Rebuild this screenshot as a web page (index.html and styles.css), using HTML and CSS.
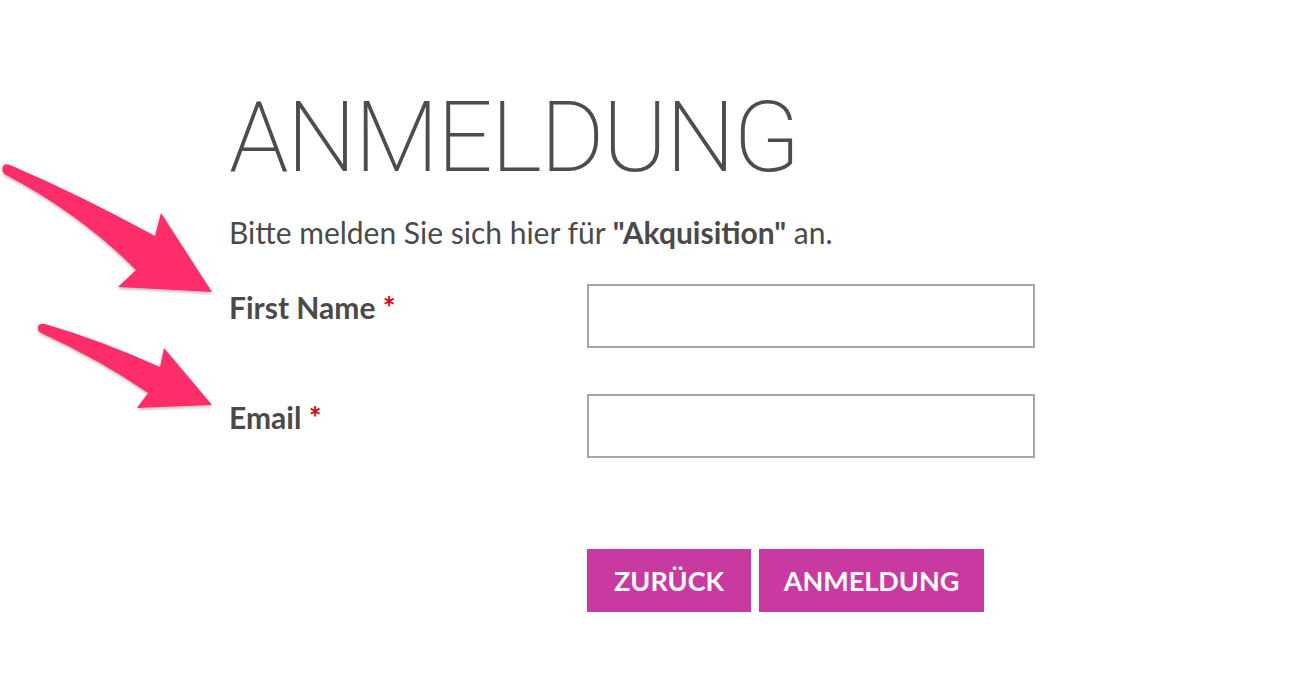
FILE: index.html
```html
<!DOCTYPE html>
<html lang="de">
<head>
<meta charset="utf-8">
<title>Anmeldung</title>
<link rel="stylesheet" href="styles.css">
</head>
<body>
<main class="page">
  <h1 class="title">ANMELDUNG</h1>
  <p class="intro">Bitte melden Sie sich hier für <strong>"Akquisition"</strong> an.</p>
  <form class="form">
    <div class="row">
      <label class="label" for="fn">First Name <span class="req">*</span></label>
      <input class="field" id="fn" type="text">
    </div>
    <div class="row">
      <label class="label" for="em">Email <span class="req">*</span></label>
      <input class="field" id="em" type="email">
    </div>
    <div class="actions">
      <button type="button" class="btn btn-back">ZURÜCK</button>
      <button type="submit" class="btn btn-submit">ANMELDUNG</button>
    </div>
  </form>
</main>
<svg class="arrows" width="260" height="440" viewBox="0 0 260 440" aria-hidden="true">
  <defs>
    <filter id="sh" x="-20%" y="-20%" width="140%" height="140%">
      <feDropShadow dx="0" dy="1.5" stdDeviation="1.5" flood-color="#000" flood-opacity="0.3"/>
    </filter>
  </defs>
  <g fill="#ff2d6b" filter="url(#sh)">
    <path d="M3 166 Q1 172 6 175 Q80 214 136 270 L118 287 L212 292 L161 213 L155 236 Q80 195 10 165 Q5 163 3 166 Z"/>
    <path d="M38 326 Q37 331 41 333 Q100 360 148 393 L137 408 L212 405 L164 348 L160 367 Q100 340 45 324 Q40 323 38 326 Z"/>
  </g>
</svg>
</body>
</html>
```
FILE: styles.css
```css
html, body {
  margin: 0;
  padding: 0;
  background: #fff;
}
body {
  font-family: Lato, "Open Sans", sans-serif;
  color: #4a4a4a;
  width: 1304px;
  height: 678px;
  overflow: hidden;
  position: relative;
}
.page {
  padding: 78px 0 0 229px;
}
.title {
  margin: 0;
  font-family: Roboto, sans-serif;
  font-weight: 200;
  font-size: 98px;
  line-height: 120px;
  letter-spacing: -1.8px;
  color: #4d4d4d;
}
.intro {
  margin: 14px 0 0 0;
  font-size: 30px;
  line-height: 40px;
  font-weight: 400;
}
.intro strong {
  font-weight: 700;
}
.form {
  margin-top: 32px;
}
.row {
  display: grid;
  grid-template-columns: 358px 448px;
  margin-bottom: 46px;
}
.label {
  font-size: 30px;
  font-weight: 700;
  line-height: 40px;
  padding-top: 3px;
}
.req {
  color: #e0001a;
}
.field {
  box-sizing: border-box;
  width: 448px;
  height: 64px;
  border: 2px solid #a6a6a6;
  border-radius: 0;
  margin: 0;
  background: #fff;
}
.actions {
  display: flex;
  gap: 8px;
  margin-left: 358px;
  margin-top: 91px;
}
.btn {
  font-family: Lato, sans-serif;
  font-size: 27px;
  font-weight: 700;
  color: #fff;
  background: #c83a9f;
  border: 0;
  height: 63px;
  padding: 0;
}
.btn-back { width: 164px; }
.btn-submit { width: 225px; }
.arrows {
  position: absolute;
  left: 0;
  top: 0;
}
```
